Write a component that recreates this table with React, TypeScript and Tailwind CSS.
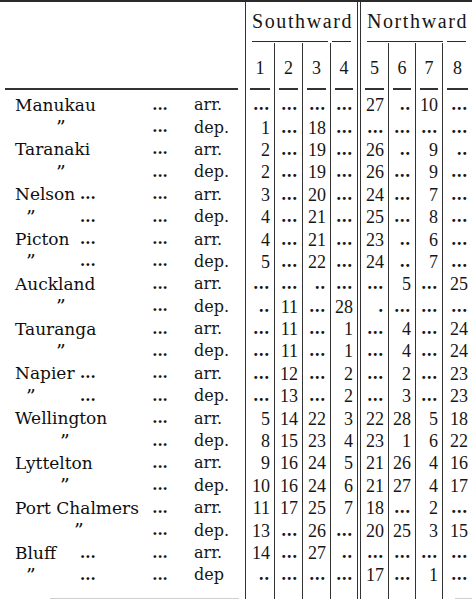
import React from "react";

const GRID =
  "grid grid-cols-[245px_29px_28px_28px_27px_4px_27px_27px_27px_30px]";

const LINE = "border-[#333]";

type Row = {
  label: string;
  pad: string;
  lead: boolean;
  kind: string;
  cells: string[];
};

const rows: Row[] = [
  { label: "Manukau", pad: "pl-[15px]", lead: false, kind: "arr.", cells: ["...", "...", "...", "...", "27", "..", "10", "..."] },
  { label: "\u201D", pad: "pl-[56px]", lead: false, kind: "dep.", cells: ["1", "...", "18", "...", "...", "...", "...", "..."] },
  { label: "Taranaki", pad: "pl-[15px]", lead: false, kind: "arr.", cells: ["2", "...", "19", "...", "26", "..", "9", ".."] },
  { label: "\u201D", pad: "pl-[56px]", lead: false, kind: "dep.", cells: ["2", "...", "19", "...", "26", "...", "9", "..."] },
  { label: "Nelson", pad: "pl-[15px]", lead: true, kind: "arr.", cells: ["3", "...", "20", "...", "24", "...", "7", "..."] },
  { label: "\u201D", pad: "pl-[26px]", lead: true, kind: "dep.", cells: ["4", "...", "21", "...", "25", "...", "8", "..."] },
  { label: "Picton", pad: "pl-[15px]", lead: true, kind: "arr.", cells: ["4", "...", "21", "...", "23", "..", "6", "..."] },
  { label: "\u201D", pad: "pl-[26px]", lead: true, kind: "dep.", cells: ["5", "...", "22", "...", "24", "..", "7", "..."] },
  { label: "Auckland", pad: "pl-[15px]", lead: false, kind: "arr.", cells: ["...", "...", "..", "...", "...", "5", "...", "25"] },
  { label: "\u201D", pad: "pl-[56px]", lead: false, kind: "dep.", cells: ["..", "11", "...", "28", ".", "...", "...", "..."] },
  { label: "Tauranga", pad: "pl-[15px]", lead: false, kind: "arr.", cells: ["...", "11", "...", "1", "...", "4", "...", "24"] },
  { label: "\u201D", pad: "pl-[56px]", lead: false, kind: "dep.", cells: ["...", "11", "...", "1", "...", "4", "...", "24"] },
  { label: "Napier", pad: "pl-[15px]", lead: true, kind: "arr.", cells: ["...", "12", "...", "2", "...", "2", "...", "23"] },
  { label: "\u201D", pad: "pl-[26px]", lead: true, kind: "dep.", cells: ["...", "13", "...", "2", "...", "3", "...", "23"] },
  { label: "Wellington", pad: "pl-[15px]", lead: false, kind: "arr.", cells: ["5", "14", "22", "3", "22", "28", "5", "18"] },
  { label: "\u201D", pad: "pl-[60px]", lead: false, kind: "dep.", cells: ["8", "15", "23", "4", "23", "1", "6", "22"] },
  { label: "Lyttelton", pad: "pl-[15px]", lead: false, kind: "arr.", cells: ["9", "16", "24", "5", "21", "26", "4", "16"] },
  { label: "\u201D", pad: "pl-[60px]", lead: false, kind: "dep.", cells: ["10", "16", "24", "6", "21", "27", "4", "17"] },
  { label: "Port Chalmers", pad: "pl-[15px]", lead: false, kind: "arr.", cells: ["11", "17", "25", "7", "18", "...", "2", "..."] },
  { label: "\u201D", pad: "pl-[74px]", lead: false, kind: "dep.", cells: ["13", "...", "26", "...", "20", "25", "3", "15"] },
  { label: "Bluff", pad: "pl-[15px]", lead: true, kind: "arr.", cells: ["14", "...", "27", "..", "...", "...", "...", "..."] },
  { label: "\u201D", pad: "pl-[26px]", lead: true, kind: "dep", cells: ["..", "...", "...", "...", "17", "...", "1", "..."] },
];

const colBorder = [
  `border-l ${LINE}`,
  `border-l ${LINE}`,
  `border-l ${LINE}`,
  `border-l ${LINE}`,
  "",
  `border-l ${LINE}`,
  `border-l ${LINE}`,
  `border-l ${LINE}`,
];

const NUM_FONT = { fontFamily: '"Liberation Serif", serif' };
const NAME_FONT = { fontFamily: '"DejaVu Serif", serif' };

function DataCell({ value, i }: { value: string; i: number }) {
  const isDots = value.startsWith(".");
  return (
    <div
      className={`flex items-center justify-end pr-[4px] text-[18px] leading-none ${
        isDots ? "tracking-[1px] pb-[2px] font-bold" : ""
      } ${colBorder[i]}`}
      style={NUM_FONT}
    >
      {value}
    </div>
  );
}

function DataRow({ row }: { row: Row }) {
  const left = row.cells.slice(0, 4);
  const right = row.cells.slice(4);
  const isDitto = row.label === "\u201D";
  return (
    <div className={`${GRID} h-[22.4px]`}>
      <div
        className="grid grid-cols-[146px_28px_1fr] items-center text-[16px] leading-none"
        style={NAME_FONT}
      >
        <div className="flex items-center whitespace-nowrap text-[17px] text-[#0f0f0f]">
          {row.lead ? (
            <>
              <span className={`inline-block w-[80px] ${row.pad} ${isDitto ? "text-[19px]" : ""}`}>
                {row.label}
              </span>
              <span className="text-[15px] font-bold">...</span>
            </>
          ) : (
            <span className={`${row.pad} ${isDitto ? "text-[19px]" : ""}`}>{row.label}</span>
          )}
        </div>
        <div className="text-center text-[15px] font-bold">...</div>
        <div className="pl-[20px]">{row.kind}</div>
      </div>
      {left.map((v, i) => (
        <DataCell key={i} value={v} i={i} />
      ))}
      <div className={`border-x ${LINE}`} />
      {right.map((v, i) => (
        <DataCell key={i + 4} value={v} i={i + 4} />
      ))}
    </div>
  );
}

function TitleRule() {
  return (
    <div className="flex gap-[4px] mx-[6px] mb-[1px]">
      <div className="flex-[4] h-[1.5px] bg-[#2a2a2a]" />
      <div className="flex-1 h-[1.5px] bg-[#2a2a2a]" />
    </div>
  );
}

function HeadNum({ n, i }: { n: string; i: number }) {
  return (
    <div className={`flex flex-col ${colBorder[i]}`}>
      <div
        className="h-[36px] pt-[15px] text-center text-[18px] leading-[20px]"
        style={NUM_FONT}
      >
        {n}
      </div>
      <div className="mt-[9px] mx-[4px] h-[1.5px] bg-[#333]" />
    </div>
  );
}

export default function App() {
  return (
    <div className="w-[472px] h-[604px] bg-white text-[#161616] overflow-hidden">
      <div className="h-[2px] bg-[#2a2a2a]" />
      {/* Title row */}
      <div className={`${GRID} h-[41px]`}>
        <div />
        <div className={`col-span-4 flex flex-col border-l ${LINE}`}>
          <div
            className="flex-1 flex items-center justify-center text-[20px] tracking-[1.6px] pl-[2px]"
            style={NUM_FONT}
          >
            Southward
          </div>
          <TitleRule />
        </div>
        <div className={`border-x ${LINE}`} />
        <div className="col-span-4 flex flex-col">
          <div
            className="flex-1 flex items-center justify-center text-[20px] tracking-[1.6px] pl-[2px]"
            style={NUM_FONT}
          >
            Northward
          </div>
          <TitleRule />
        </div>
      </div>
      {/* Number row */}
      <div className={`${GRID} h-[51px]`}>
        <div className="flex flex-col">
          <div className="mt-[45px] ml-[5px] mr-[7px] h-[1.5px] bg-[#333]" />
        </div>
        {["1", "2", "3", "4"].map((n, i) => (
          <HeadNum key={n} n={n} i={i} />
        ))}
        <div className={`border-x ${LINE}`} />
        {["5", "6", "7", "8"].map((n, i) => (
          <HeadNum key={n} n={n} i={i + 4} />
        ))}
      </div>
      {rows.map((r, idx) => (
        <DataRow key={idx} row={r} />
      ))}
      {/* Tail of rules */}
      <div className={`${GRID} h-[12px]`}>
        <div className="flex flex-col justify-end">
          <div className="ml-[50px] mr-[6px] h-px bg-[#cfcfcf]" />
        </div>
        {[0, 1, 2, 3].map((i) => (
          <div key={i} className={colBorder[i]} />
        ))}
        <div className={`border-x ${LINE}`} />
        {[4, 5, 6, 7].map((i) => (
          <div key={i} className={`${colBorder[i]} ${i === 7 ? "flex flex-col justify-end" : ""}`}>
            {i === 7 ? <div className="ml-[12px] h-px bg-[#cfcfcf]" /> : null}
          </div>
        ))}
      </div>
    </div>
  );
}
